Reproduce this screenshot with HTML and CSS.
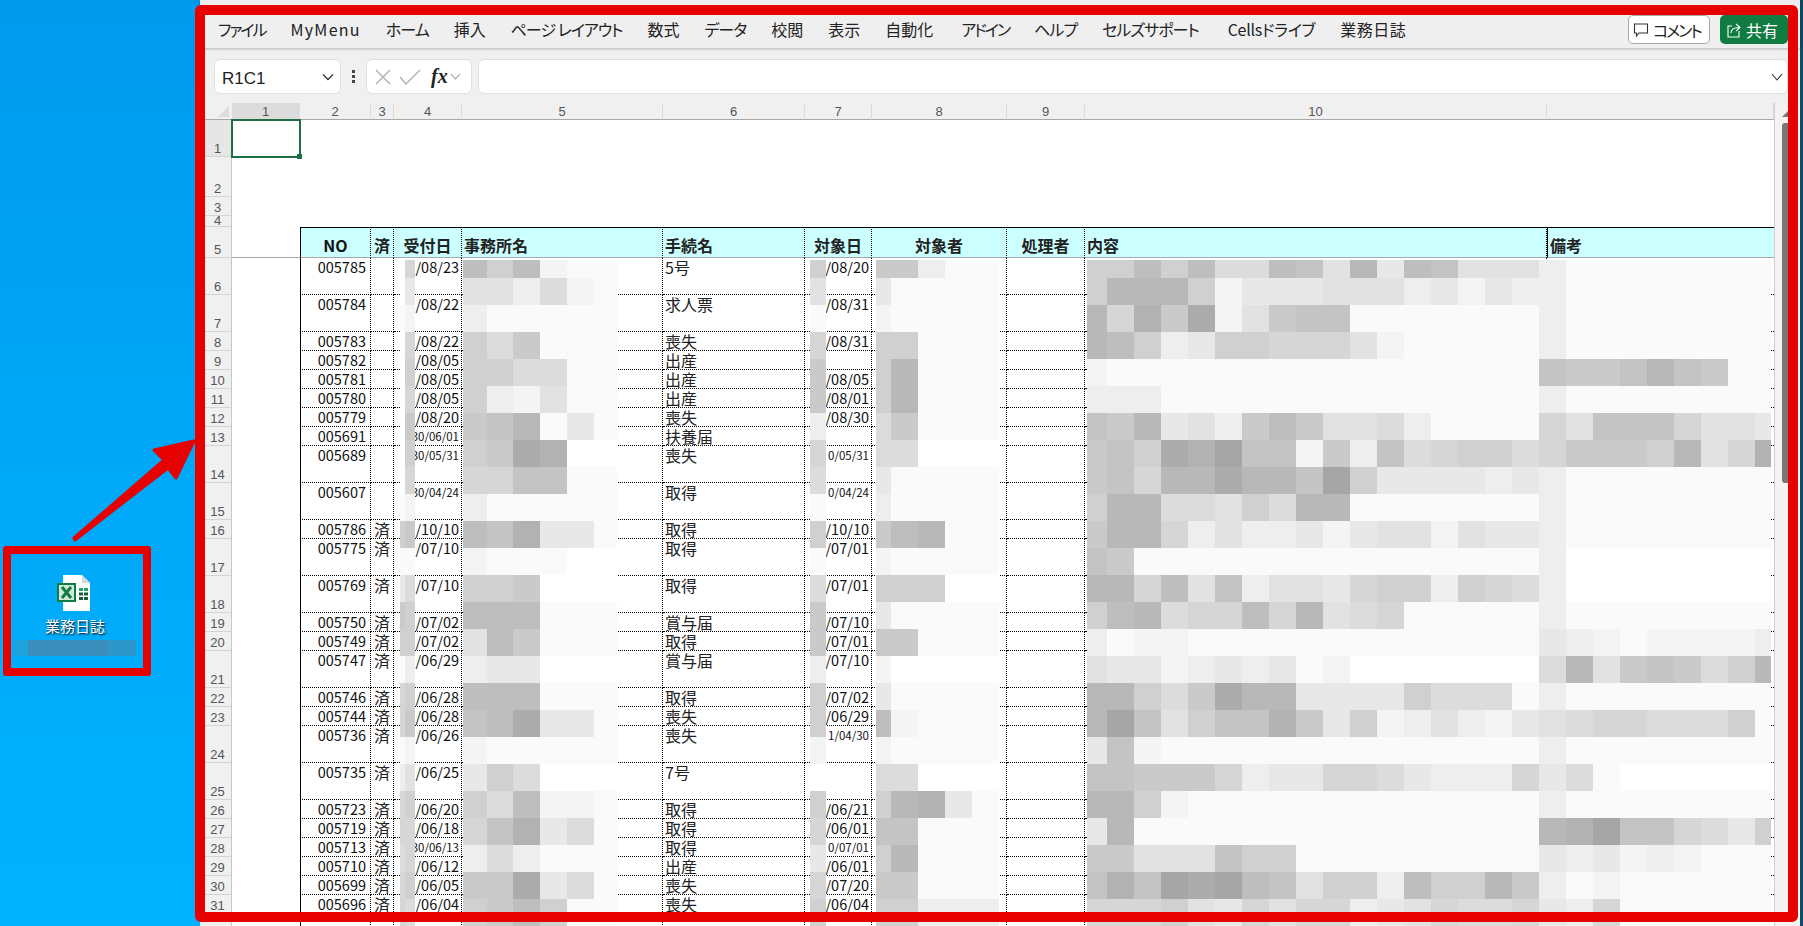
FILE: index.html
```html
<!DOCTYPE html>
<html lang="ja">

<head>
    <meta charset="UTF-8">
    <meta name="viewport" content="width=device-width, initial-scale=1.0">
    <title>業務日誌</title>
    <link rel="stylesheet" href="styles.css">
</head>

<body>
    <div class="desktop">
        <div class="shortcut">
            <svg class="xlsIcon" width="36" height="38" viewBox="0 0 36 38">
                <path d="M7 1H26L34 9V37H7Z" fill="#fff" />
                <path d="M26 1L34 9H26Z" fill="#d8d8d8" />
                <rect x="1" y="9" width="19" height="19" fill="#107c41" />
                <rect x="3" y="11" width="15" height="15" fill="#cfe8d8" />
                <path d="M6 13L15 24M15 13L6 24" stroke="#107c41" stroke-width="3" />
                <path d="M23 14h4v3h-4zM28 14h4v3h-4z" fill="#21a366" />
                <path d="M23 18.500h4v3h-4zM28 18.500h4v3h-4zM23 23h4v3h-4zM28 23h4v3h-4z" fill="#185c37" />
            </svg>
            <div class="shortcutName">業務日誌</div>
            <div class="blurName"><span></span><span></span><span></span></div>
        </div>
    </div>

    <div class="window">
        <div class="ribbon">
            <span class="kanaTight">ファイル</span>
            <span class="latin">MyMenu</span>
            <span class="kana">ホーム</span>
            <span>挿入</span>
            <span class="kana">ページ レイアウト</span>
            <span>数式</span>
            <span class="kana">データ</span>
            <span>校閲</span>
            <span>表示</span>
            <span>自動化</span>
            <span class="kanaTight spaced">アドイン</span>
            <span class="kana">ヘルプ</span>
            <span class="kana">セルズサポート</span>
            <span class="cells">Cellsドライブ</span>
            <span class="kanji">業務日誌</span>
            <div class="commentBtn">
                <svg width="16" height="16" viewBox="0 0 16 16" fill="none" stroke="#333" stroke-width="1.100">
                    <path d="M1.500 2H14.500V11H6L3.500 14V11H1.500Z" />
                </svg>
                <span class="kanaTight">コメント</span>
            </div>
            <div class="shareBtn">
                <svg width="16" height="16" viewBox="0 0 16 16" fill="none" stroke="#fff" stroke-width="1.100">
                    <path d="M6 4H2V15H13V9" />
                    <path d="M5 11C5 7 8 5.500 13 5.500M10 2L14 5.500L10 9" />
                </svg>
                共有
            </div>
        </div>

        <div class="formulaBar">
            <div class="nameBox"><span class="nameText">R1C1</span>
                <svg width="12" height="8" viewBox="0 0 12 8" fill="none" stroke="#333" stroke-width="1.300">
                    <path d="M1 1.500L6 6.500L11 1.500" />
                </svg>
            </div>
            <svg class="dots" width="4" height="14" viewBox="0 0 4 14" fill="#444">
                <rect x="0" y="0" width="3" height="3" />
                <rect x="0" y="5" width="3" height="3" />
                <rect x="0" y="10" width="3" height="3" />
            </svg>
            <div class="fxBox">
                <svg width="18" height="16" viewBox="0 0 18 16" fill="none" stroke="#b4b4b4" stroke-width="1.500">
                    <path d="M2 1L16 15M16 1L2 15" />
                </svg>
                <svg width="22" height="16" viewBox="0 0 22 16" fill="none" stroke="#b4b4b4" stroke-width="1.500">
                    <path d="M1 8L7 15L21 1" />
                </svg>
                <span class="fx">fx</span>
                <svg width="11" height="7" viewBox="0 0 11 7" fill="none" stroke="#999" stroke-width="1.100">
                    <path d="M1 1L5.500 6L10 1" />
                </svg>
            </div>
            <div class="formulaInput">
                <svg width="12" height="8" viewBox="0 0 12 8" fill="none" stroke="#333" stroke-width="1.100">
                    <path d="M1 1L6 7L11 1" />
                </svg>
            </div>
        </div>

        <div class="sheet">
            <table class="grid">
                <colgroup>
                    <col class="c0">
                    <col class="c1">
                    <col class="c2">
                    <col class="c3">
                    <col class="c4">
                    <col class="c5">
                    <col class="c6">
                    <col class="c7">
                    <col class="c8">
                    <col class="c9">
                    <col class="c10">
                    <col class="c11">
                </colgroup>
                <tr class="colHead">
                    <th class="corner"><i></i></th>
                    <th class="picked">1</th>
                    <th>2</th>
                    <th>3</th>
                    <th>4</th>
                    <th>5</th>
                    <th>6</th>
                    <th>7</th>
                    <th>8</th>
                    <th>9</th>
                    <th>10</th>
                    <th></th>
                </tr>
                <tr class="h37 blank"><th class="rowNo pickedRow">1</th><td class="current"><i></i></td><td colspan="10"></td></tr>
                <tr class="h40 blank"><th class="rowNo">2</th><td colspan="11"></td></tr>
                <tr class="h19 blank"><th class="rowNo">3</th><td colspan="11"></td></tr>
                <tr class="h11 blank"><th class="rowNo">4</th><td colspan="11"></td></tr>
                <tr class="h31 head">
                    <th class="rowNo">5</th><td class="empty"></td>
                    <td class="no mid">NO</td><td class="mid">済</td><td class="mid">受付日</td><td>事務所名</td>
                    <td>手続名</td><td class="mid">対象日</td><td class="mid">対象者</td><td class="mid">処理者</td><td>内容</td><td class="note">備考</td>
                </tr>
                <tr class="h37"><th class="rowNo">6</th><td class="empty"></td><td class="no">005785</td><td class="done"></td><td class="day">/08/23</td><td></td><td>5号</td><td class="day">/08/20</td><td></td><td></td><td></td><td></td></tr>
                <tr class="h37"><th class="rowNo">7</th><td class="empty"></td><td class="no">005784</td><td class="done"></td><td class="day">/08/22</td><td></td><td>求人票</td><td class="day">/08/31</td><td></td><td></td><td></td><td></td></tr>
                <tr class="h19"><th class="rowNo">8</th><td class="empty"></td><td class="no">005783</td><td class="done"></td><td class="day">/08/22</td><td></td><td>喪失</td><td class="day">/08/31</td><td></td><td></td><td></td><td></td></tr>
                <tr class="h19"><th class="rowNo">9</th><td class="empty"></td><td class="no">005782</td><td class="done"></td><td class="day">/08/05</td><td></td><td>出産</td><td class="day"></td><td></td><td></td><td></td><td></td></tr>
                <tr class="h19"><th class="rowNo">10</th><td class="empty"></td><td class="no">005781</td><td class="done"></td><td class="day">/08/05</td><td></td><td>出産</td><td class="day">/08/05</td><td></td><td></td><td></td><td></td></tr>
                <tr class="h19"><th class="rowNo">11</th><td class="empty"></td><td class="no">005780</td><td class="done"></td><td class="day">/08/05</td><td></td><td>出産</td><td class="day">/08/01</td><td></td><td></td><td></td><td></td></tr>
                <tr class="h19"><th class="rowNo">12</th><td class="empty"></td><td class="no">005779</td><td class="done"></td><td class="day">/08/20</td><td></td><td>喪失</td><td class="day">/08/30</td><td></td><td></td><td></td><td></td></tr>
                <tr class="h19"><th class="rowNo">13</th><td class="empty"></td><td class="no">005691</td><td class="done"></td><td class="day small">30/06/01</td><td></td><td>扶養届</td><td class="day"></td><td></td><td></td><td></td><td></td></tr>
                <tr class="h37"><th class="rowNo">14</th><td class="empty"></td><td class="no">005689</td><td class="done"></td><td class="day small">30/05/31</td><td></td><td>喪失</td><td class="day small">0/05/31</td><td></td><td></td><td></td><td></td></tr>
                <tr class="h37"><th class="rowNo">15</th><td class="empty"></td><td class="no">005607</td><td class="done"></td><td class="day small">30/04/24</td><td></td><td>取得</td><td class="day small">0/04/24</td><td></td><td></td><td></td><td></td></tr>
                <tr class="h19"><th class="rowNo">16</th><td class="empty"></td><td class="no">005786</td><td class="done">済</td><td class="day">/10/10</td><td></td><td>取得</td><td class="day">/10/10</td><td></td><td></td><td></td><td></td></tr>
                <tr class="h37"><th class="rowNo">17</th><td class="empty"></td><td class="no">005775</td><td class="done">済</td><td class="day">/07/10</td><td></td><td>取得</td><td class="day">/07/01</td><td></td><td></td><td></td><td></td></tr>
                <tr class="h37"><th class="rowNo">18</th><td class="empty"></td><td class="no">005769</td><td class="done">済</td><td class="day">/07/10</td><td></td><td>取得</td><td class="day">/07/01</td><td></td><td></td><td></td><td></td></tr>
                <tr class="h19"><th class="rowNo">19</th><td class="empty"></td><td class="no">005750</td><td class="done">済</td><td class="day">/07/02</td><td></td><td>賞与届</td><td class="day">/07/10</td><td></td><td></td><td></td><td></td></tr>
                <tr class="h19"><th class="rowNo">20</th><td class="empty"></td><td class="no">005749</td><td class="done">済</td><td class="day">/07/02</td><td></td><td>取得</td><td class="day">/07/01</td><td></td><td></td><td></td><td></td></tr>
                <tr class="h37"><th class="rowNo">21</th><td class="empty"></td><td class="no">005747</td><td class="done">済</td><td class="day">/06/29</td><td></td><td>賞与届</td><td class="day">/07/10</td><td></td><td></td><td></td><td></td></tr>
                <tr class="h19"><th class="rowNo">22</th><td class="empty"></td><td class="no">005746</td><td class="done">済</td><td class="day">/06/28</td><td></td><td>取得</td><td class="day">/07/02</td><td></td><td></td><td></td><td></td></tr>
                <tr class="h19"><th class="rowNo">23</th><td class="empty"></td><td class="no">005744</td><td class="done">済</td><td class="day">/06/28</td><td></td><td>喪失</td><td class="day">/06/29</td><td></td><td></td><td></td><td></td></tr>
                <tr class="h37"><th class="rowNo">24</th><td class="empty"></td><td class="no">005736</td><td class="done">済</td><td class="day">/06/26</td><td></td><td>喪失</td><td class="day small">1/04/30</td><td></td><td></td><td></td><td></td></tr>
                <tr class="h37"><th class="rowNo">25</th><td class="empty"></td><td class="no">005735</td><td class="done">済</td><td class="day">/06/25</td><td></td><td>7号</td><td class="day"></td><td></td><td></td><td></td><td></td></tr>
                <tr class="h19"><th class="rowNo">26</th><td class="empty"></td><td class="no">005723</td><td class="done">済</td><td class="day">/06/20</td><td></td><td>取得</td><td class="day">/06/21</td><td></td><td></td><td></td><td></td></tr>
                <tr class="h19"><th class="rowNo">27</th><td class="empty"></td><td class="no">005719</td><td class="done">済</td><td class="day">/06/18</td><td></td><td>取得</td><td class="day">/06/01</td><td></td><td></td><td></td><td></td></tr>
                <tr class="h19"><th class="rowNo">28</th><td class="empty"></td><td class="no">005713</td><td class="done">済</td><td class="day small">30/06/13</td><td></td><td>取得</td><td class="day small">0/07/01</td><td></td><td></td><td></td><td></td></tr>
                <tr class="h19"><th class="rowNo">29</th><td class="empty"></td><td class="no">005710</td><td class="done">済</td><td class="day">/06/12</td><td></td><td>出産</td><td class="day">/06/01</td><td></td><td></td><td></td><td></td></tr>
                <tr class="h19"><th class="rowNo">30</th><td class="empty"></td><td class="no">005699</td><td class="done">済</td><td class="day">/06/05</td><td></td><td>喪失</td><td class="day">/07/20</td><td></td><td></td><td></td><td></td></tr>
                <tr class="h19"><th class="rowNo">31</th><td class="empty"></td><td class="no">005696</td><td class="done">済</td><td class="day">/06/04</td><td></td><td>喪失</td><td class="day">/06/04</td><td></td><td></td><td></td><td></td></tr>
                <tr class="h19"><th class="rowNo"></th><td class="empty"></td><td class="no"></td><td class="done"></td><td class="day"></td><td></td><td></td><td class="day"></td><td></td><td></td><td></td><td></td></tr>
            </table>
            <div class="scrollBar">
                <i class="scrollUp"></i>
                <i class="scrollThumb"></i>
            </div>
        </div>
    </div>
    <div class="edge"></div>

    <svg id="mosaic" class="mosaic" width="1803" height="926"></svg>

    <div class="redFrame"></div>
    <div class="redBox"></div>
    <svg class="redArrow" width="200" height="120" viewBox="0 0 200 120">
        <path d="M2 112L92 34L82 24L122 15L104 52L96 42L3 114Z" />
    </svg>

    <script src="mosaic.js"></script>
</body>

</html>
```

FILE: styles.css
```css
* {
    box-sizing: border-box;
}

html,
body {
    margin: 0;
    height: 926px;
    overflow: hidden;
}

body {
    width: 1803px;
    display: flex;
    position: relative;
    font-family: "Noto Sans CJK JP", "Liberation Sans", sans-serif;
    font-feature-settings: "palt";
    color: #222;
    background: linear-gradient(180deg, #0099ee 0%, #00a8f8 50%, #00b2ff 100%);
}

/* desktop side */
.desktop {
    width: 200px;
    padding-top: 574px;
}

.shortcut {
    width: 150px;
    display: flex;
    flex-direction: column;
    align-items: center;
}

.xlsIcon {
    margin-left: -3px;
}

.shortcutName {
    margin-top: 4px;
    font-size: 15px;
    line-height: 20px;
    color: #fff;
    text-shadow: 1px 1px 2px #000;
}

.blurName {
    margin-top: 4px;
    width: 122px;
    height: 16px;
    display: flex;
}

.blurName span:nth-child(1) {
    width: 14px;
    background: #1aa3dc;
}

.blurName span:nth-child(2) {
    width: 81px;
    background: #3a8fbc;
}

.blurName span:nth-child(3) {
    width: 27px;
    background: #2e97c9;
}

/* the app window */
.window {
    width: 1600px;
    display: flex;
    flex-direction: column;
    background: #f0f0f0;
}

.edge {
    flex: 1;
    background: #0c4d6b;
}

.ribbon {
    height: 48px;
    padding: 10px 12px 0 18px;
    display: flex;
    align-items: center;
    gap: 25px;
    font-size: 16px;
    background: #efefef;
    box-shadow: 0 1px 3px rgba(0, 0, 0, .25);
    position: relative;
}

.ribbon span {
    white-space: nowrap;
}

.ribbon .kana {
    letter-spacing: -1px;
}

.ribbon .kanaTight {
    letter-spacing: -2px;
}

.ribbon .kanji {
    letter-spacing: .5px;
}

.ribbon .latin {
    letter-spacing: 1.300px;
}

.ribbon .spaced {
    margin-left: 3px;
}

.ribbon .cells {
    margin-left: 4px;
    letter-spacing: -.3px;
}

.commentBtn,
.shareBtn {
    height: 29px;
    margin-top: 1px;
    display: flex;
    align-items: center;
    gap: 4px;
    border-radius: 5px;
    white-space: nowrap;
}

.commentBtn {
    width: 82px;
    margin-left: auto;
    padding-left: 4px;
    background: #fff;
    border: 1px solid #aaa;
}

.shareBtn {
    width: 68px;
    margin-left: -15px;
    padding-left: 6px;
    color: #fff;
    background: #107c41;
}

.formulaBar {
    height: 55px;
    padding: 11px 12px 9px 14px;
    display: flex;
    gap: 6px;
    align-items: stretch;
}

.nameBox,
.fxBox,
.formulaInput {
    background: #fff;
    border: 1px solid #dedede;
    border-radius: 6px;
    display: flex;
    align-items: center;
}

.nameBox {
    width: 127px;
    padding: 0 6px 0 7px;
    justify-content: space-between;
    font-family: "Liberation Sans", sans-serif;
    font-size: 17px;
}

.nameText {
    padding-top: 4px;
}

.dots {
    align-self: center;
    margin: 0 4px 0 5px;
}

.fxBox {
    width: 106px;
    padding-left: 7px;
    gap: 7px;
}

.fx {
    font-family: "Liberation Serif", serif;
    font-style: italic;
    font-weight: bold;
    font-size: 20px;
    margin-left: 3px;
    margin-right: -5px;
}

.formulaInput {
    flex: 1;
    justify-content: flex-end;
    padding-right: 4px;
}

/* spreadsheet */
.sheet {
    flex: 1;
    display: flex;
    min-height: 0;
}

.grid {
    width: 1574px;
    flex: none;
    table-layout: fixed;
    border-collapse: separate;
    border-spacing: 0;
    background: #fff;
    font-size: 16px;
    line-height: 16px;
    align-self: flex-start;
}

.c0 { width: 32px; }
.c1 { width: 68px; }
.c2 { width: 71px; }
.c3 { width: 23px; }
.c4 { width: 68px; }
.c5 { width: 201px; }
.c6 { width: 142px; }
.c7 { width: 67px; }
.c8 { width: 135px; }
.c9 { width: 78px; }
.c10 { width: 462px; }
.c11 { width: 227px; }

.grid td,
.grid th {
    padding: 0;
    white-space: nowrap;
    font-weight: normal;
}

.colHead th {
    height: 17px;
    background: #f0f0f0;
    border-bottom: 1px solid #a8a8a8;
    border-right: 1px solid #dcdcdc;
    font-family: "Liberation Sans", sans-serif;
    font-size: 13px;
    line-height: 14px;
    color: #555;
    vertical-align: bottom;
}

.colHead .corner {
    position: relative;
    border-right: 0;
}

.corner i {
    position: absolute;
    right: 3px;
    bottom: 2px;
    border-style: solid;
    border-width: 0 0 11px 11px;
    border-color: transparent transparent #dcdcdc transparent;
}

.colHead .picked {
    background: #dcdcdc;
}

.h37 { height: 37px; }
.h40 { height: 40px; }
.h19 { height: 19px; }
.h11 { height: 11px; }
.h31 { height: 31px; }

.grid .rowNo {
    padding-left: 4px;
    background: #f0f0f0;
    border-right: 1px solid #c8c8c8;
    border-bottom: 1px solid #d4d4d4;
    font-family: "Liberation Sans", sans-serif;
    font-size: 13px;
    line-height: 14px;
    color: #555;
    vertical-align: bottom;
}

.h11 .rowNo {
    line-height: 10px;
}

.grid .pickedRow {
    background: #e6e6e6;
}

.grid td {
    padding: 1px 0 0 2px;
    vertical-align: top;
    border-right: 1px dotted #000;
    border-bottom: 1px dotted #000;
}

.grid .empty,
.blank td {
    border-right: 0;
    border-bottom: 0;
}

.blank td {
    padding: 0;
    line-height: 0;
}

.grid td.no,
.grid td.day {
    text-align: right;
    font-size: 14.500px;
    line-height: 16px;
    color: #111;
}

.grid td.no {
    padding: 1px 4px 0 0;
    border-left: 1px solid #000;
}

.grid td.day {
    padding: 1px 2px 0 0;
}

.grid td.small {
    font-size: 11.500px;
}

.grid td.done {
    padding: 1px 0 0;
    text-align: center;
}

.blank .current {
    position: relative;
}

.current i {
    position: absolute;
    left: -1px;
    top: -1px;
    right: -1px;
    bottom: -1px;
    border: 2px solid #1f6f45;
}

.current i::after {
    content: "";
    position: absolute;
    right: -3px;
    bottom: -3px;
    width: 5px;
    height: 5px;
    background: #1f6f45;
}

.head td {
    padding-top: 5px;
    vertical-align: middle;
    background: #ccffff;
    border-top: 1px solid #000;
    border-bottom: 1px solid #a8a8a8;
    font-weight: bold;
}

.head td.empty {
    background: #fff;
    border-top: 0;
    border-bottom: 1px solid #a8a8a8;
}

.head td.mid,
.head td.no {
    padding: 5px 0 0;
    font-size: 16px;
    font-weight: bold;
    text-align: center;
}

.grid td.note {
    border-left: 1px solid #000;
    border-right: 0;
}

.grid td:last-child {
    border-right: 0;
}

.scrollBar {
    width: 26px;
    background: #f6f2f2;
    border-left: 1px solid #cfcfcf;
    padding: 7px 0 0 7px;
}

.scrollUp {
    display: block;
    width: 0;
    border-style: solid;
    border-width: 0 0 7px 7px;
    border-color: transparent transparent #777 transparent;
}

.scrollThumb {
    display: block;
    width: 10px;
    height: 360px;
    margin-top: 6px;
    border-radius: 3px;
    background: #777;
}

/* pixelated parts and the red notes, all on top of the page */
.mosaic {
    position: absolute;
    left: 0;
    top: 0;
    shape-rendering: crispEdges;
}

.redFrame {
    position: absolute;
    left: 195px;
    top: 5px;
    width: 1603px;
    height: 917px;
    border: 10px solid #e60000;
    border-radius: 6px;
}

.redBox {
    position: absolute;
    left: 3px;
    top: 546px;
    width: 148px;
    height: 130px;
    border: 8px solid #e60000;
    border-radius: 3px;
}

.redArrow {
    position: absolute;
    left: 72px;
    top: 426px;
    fill: #e60000;
    stroke: #e60000;
    stroke-width: 3;
    stroke-linejoin: round;
}
```

FILE: mosaic.js
```js
// pixelated blocks, one string per band of 27px, one char per block
const columns = [
    {
        xs: [400, 405, 415],
        bands: ["w9", "wc", "fe", "w9", "w8", "w9", "w7", "w8", "w9", "fe", "87", "ff", "ca", "78", "88", "fd", "98", "97", "fe", "db", "98", "99", "a9", "98", "9a"]
    },
    {
        xs: [463, 487, 513, 540, 567, 594, 617],
        bands: ["585eff", "bbdaef", "dfffff", "8a7fff", "88aaff", "8debff", "764fcf", "8723ww", "9966ff", "dfffff", "563ccf", "efffww", "887www", "555fff", "b57fff", "dccwww", "555fff", "652ccf", "efffff", "c8awww", "8a5eef", "963caf", "dadfff", "772caf", "8758ff"]
    },
    {
        xs: [810, 826],
        bands: "8bf977d9af8fa77d88ew89c98".split("")
    },
    {
        xs: [876, 891, 918, 945, 972, 999],
        bands: ["77dff", "cffff", "effff", "88fff", "84fff", "84fff", "a7fff", "aawww", "cffff", "dffff", "754ff", "effff", "888ww", "cffff", "77fff", "ewwww", "cffff", "5efff", "effff", "aawww", "843cf", "66fff", "84fff", "77fff", "88ddd"]
    },
    {
        xs: [1087, 1107, 1134, 1161, 1188, 1215, 1242, 1269, 1296, 1323, 1350, 1377, 1404, 1431, 1458, 1485, 1512, 1539],
        bands: [
            "88585aa56b4c56bbb",
            "84448ecccbbbdcecd",
            "49372eb766fffffff",
            "458dc88999befffff",
            "effffffffffffffff",
            "dddffffffffffffff",
            "674cbd757bbadffff",
            "76823166e7d6a988a",
            "76944244618ccccdc",
            "844aab8a44fffffff",
            "7449dbddcecbbebcc",
            "67fffffffffffffff",
            "4495b6dbbc988d89a",
            "854a99594ba9fffff",
            "dfeefffffffffffff",
            "bccedcdcfewwwwwww",
            "448a7244cccc8aaaf",
            "416b86637c8edbdec",
            "c6effffffffffffff",
            "667779dcc99acddd9",
            "448efffffffffffff",
            "c4fffffffffffffff",
            "77bbb688fffffffff",
            "63612156b88d58847",
            "9998bc9b99dcb9aa9"
        ]
    },
    {
        xs: [1539, 1566, 1593, 1620, 1647, 1674, 1701, 1728, 1755, 1771],
        bands: ["dffffffff", "dffffffff", "dffffffff", "dffffffff", "6776467ff", "dffffffff", "9b6669bbc", "977784b93", "dffffffff", "dffffffff", "dffffffff", "dwwwwwwww", "dwwwwwwww", "dffffffff", "cdefeeeed", "a4b767a84", "dffffffff", "ba99aaa8f", "dffffffff", "cafwwwwww", "dffffffff", "431669ac8", "cdcedefff", "dfeffffff", "cd9ffffff"]
    }
];

const bandTop = i => (i === 0 ? 260 : 278 + 27 * (i - 1));
const bandHeight = i => (i === 0 ? 18 : 27);
const greyOf = c => {
    if (c === "w") return "#fff";
    const g = (0xa0 + 6 * parseInt(c, 16)).toString(16);
    return "#" + g + g + g;
};

const mosaic = document.getElementById("mosaic");
for (const col of columns) {
    col.bands.forEach((band, i) => {
        for (let k = 0; k < band.length && k < col.xs.length - 1; k++) {
            const r = document.createElementNS("http://www.w3.org/2000/svg", "rect");
            r.setAttribute("x", col.xs[k]);
            r.setAttribute("y", bandTop(i));
            r.setAttribute("width", col.xs[k + 1] - col.xs[k]);
            r.setAttribute("height", bandHeight(i));
            r.setAttribute("fill", greyOf(band[k]));
            mosaic.appendChild(r);
        }
    });
}
```
